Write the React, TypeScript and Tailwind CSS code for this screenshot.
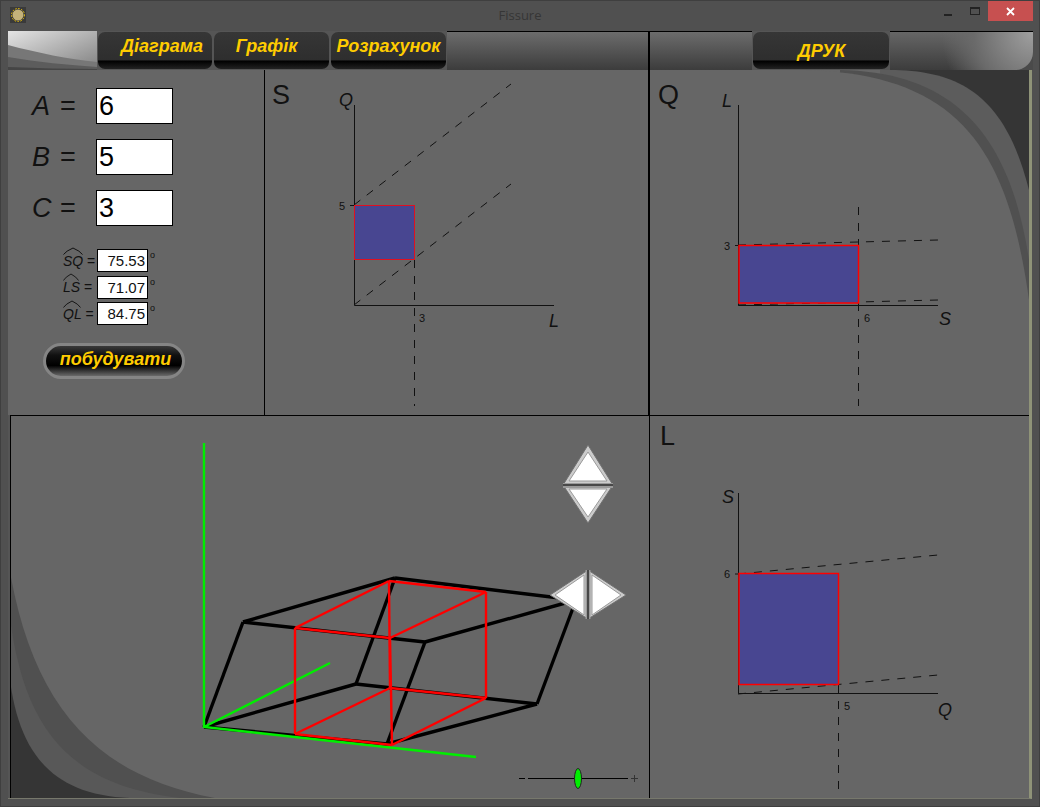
import type { ReactNode } from 'react';

type Seg = [number, number, number, number];

const blackEdges: Seg[] = [
  [204, 727, 243, 622],
  [243, 622, 425, 642],
  [425, 642, 387, 744],
  [204, 727, 387, 744],
  [243, 622, 395, 578],
  [395, 578, 576, 600],
  [425, 642, 576, 600],
  [576, 600, 537, 704],
  [387, 744, 537, 704],
  [204, 727, 356, 684],
  [356, 684, 537, 704],
  [356, 684, 395, 578],
];

const redEdges: Seg[] = [
  [295, 628, 390, 638],
  [295, 628, 389, 581],
  [389, 581, 486, 592],
  [486, 592, 390, 638],
  [486, 592, 486, 698],
  [390, 688, 486, 698],
  [295, 734, 390, 688],
  [295, 628, 295, 734],
  [295, 734, 392, 745],
  [392, 745, 486, 698],
  [390, 638, 392, 745],
  [389, 581, 390, 688],
];

function NavButton(props: { label: string; className?: string; width?: string }) {
  return (
    <div className={`h-[39px] bg-[#555555] p-[1px] ${props.width ?? 'w-[117px]'}`}>
      <div
        className={`flex h-full items-center justify-center rounded-[7px] bg-[linear-gradient(#363636_0%,#2e2e2e_76%,#000000_78%,#222222_100%)] text-[18px] font-bold italic text-[#ffcc00] ${props.className ?? ''}`}
      >
        {props.label}
      </div>
    </div>
  );
}

function BigField(props: { name: string; value: string }) {
  return (
    <div className="flex h-[36px] items-center">
      <div className="flex w-[64px] text-[27px] leading-none text-[#111111]">
        <i className="w-[28px]">{props.name}</i>
        <span>=</span>
      </div>
      <div className="flex h-[36px] w-[77px] items-center border border-black bg-white pl-[2px] text-[27px] leading-none text-black">
        {props.value}
      </div>
    </div>
  );
}

function AngleField(props: { name: string; value: string; hat: number }) {
  return (
    <div className="flex h-[23px] items-center">
      <div className="relative w-[34px] text-[14px] leading-none text-[#111111]">
        <svg className="absolute left-0 top-[-7px]" width={props.hat} height="8" viewBox="0 0 20 8" preserveAspectRatio="none">
          <path d="M0.5 7.5 Q3 4 10 1 Q17 4 19.5 7.5" fill="none" stroke="#111111" strokeWidth="1" />
        </svg>
        <i>{props.name}</i> =
      </div>
      <div className="flex h-[23px] w-[51px] items-center justify-end border border-black bg-white pr-[2px] text-[15px] leading-none text-[#111111]">
        {props.value}
      </div>
      <span className="ml-[2px] mt-[2px] self-start text-[9px] leading-none text-[#111111]">o</span>
    </div>
  );
}

// svg that fills its panel and is drawn in page coordinates
function PanelSvg(props: { box: string; children: ReactNode }) {
  return (
    <svg className="absolute inset-0 h-full w-full" viewBox={props.box}>
      {props.children}
    </svg>
  );
}

function AxisLabel(props: { x: number; y: number; text: string }) {
  return (
    <text x={props.x} y={props.y} fontSize="18" fontStyle="italic" textAnchor="middle" fill="#111111">
      {props.text}
    </text>
  );
}

function TickLabel(props: { x: number; y: number; text: string }) {
  return (
    <text x={props.x} y={props.y} fontSize="11" textAnchor="middle" fill="#111111">
      {props.text}
    </text>
  );
}

function App() {
  return (
    <div className="relative flex h-[807px] w-[1040px] flex-col overflow-hidden bg-[#505050] font-['Liberation_Sans',Arial,sans-serif] shadow-[inset_0_0_0_1px_#3f3f3f]">
      {/* title bar */}
      <div className="relative flex h-[31px] items-start justify-center">
        <svg className="absolute left-[10px] top-[7px]" width="16" height="16" viewBox="0 0 16 16">
          <rect width="16" height="16" fill="#3a3a3a" />
          <circle cx="8" cy="8" r="5.5" fill="#c4b27a" />
          <circle cx="8" cy="8" r="6.5" fill="none" stroke="#f5c800" strokeWidth="1" strokeDasharray="1.5 1.5" />
        </svg>
        <span className="mt-[7px] font-['Open_Sans',sans-serif] text-[13px] leading-[17px] text-[#363636]">Fissure</span>
        <div className="absolute left-[944px] top-[14px] h-[2px] w-[8px] bg-[#222222]" />
        <div className="absolute left-[970px] top-[7px] h-[8px] w-[10px] border border-t-2 border-[#222222]" />
        <div className="absolute left-[988px] top-[1px] flex h-[20px] w-[45px] items-center justify-center bg-[#c75050]">
          <svg width="9" height="9" viewBox="0 0 9 9">
            <path d="M1 1 L8 8 M8 1 L1 8" stroke="#ffffff" strokeWidth="1.8" />
          </svg>
        </div>
      </div>

      {/* toolbar */}
      <div className="ml-[8px] flex h-[39px] w-[1025px]">
        <svg className="h-[39px] w-[89px] shrink-0" viewBox="0 0 89 39">
          <defs>
            <linearGradient id="sw" x1="0" y1="0" x2="1" y2="1">
              <stop offset="0" stopColor="#e4e4e4" />
              <stop offset="1" stopColor="#808080" />
            </linearGradient>
          </defs>
          <rect width="89" height="39" fill="url(#sw)" />
          <path d="M0 14 C30 22 60 28 89 31 V39 H0 Z" fill="#777777" />
          <path d="M0 26 C30 31 60 34 89 36 V39 H0 Z" fill="#5c5c5c" />
          <path d="M0 36 C30 37 60 38 89 38 V39 H0 Z" fill="#454545" />
        </svg>
        <NavButton label="Діаграма" className="pb-[8px] pl-[14px]" width="w-[116px]" />
        <NavButton label="Графік" className="pb-[8px] pr-[10px]" />
        <NavButton label="Розрахунок" className="pb-[8px]" />
        <div className="w-[203px] border-t border-r-2 border-black bg-[linear-gradient(#6c6c6c,#3c3c3c)]" />
        <div className="w-[102px] border-t border-black bg-[linear-gradient(#6c6c6c,#3c3c3c)]" />
        <NavButton label="ДРУК" className="pl-[1px] pt-[2px]" width="w-[138px]" />
        <div className="flex-1 bg-[#4a4a4a]">
          <div className="h-full rounded-br-[18px] border-t border-black bg-[radial-gradient(circle_at_100%_0%,#a0a0a0_0%,#6a6a6a_40%,transparent_62%),linear-gradient(#666666,#3c3c3c)]" />
        </div>
      </div>

      {/* main area */}
      <div className="relative ml-[8px] h-[729px] w-[1024px] border-r-[3px] border-b border-r-[#8f9378] border-b-[#77786c] bg-[#666666] text-[#111111]">
        {/* corner swooshes */}
        <svg className="absolute inset-0 h-full w-full" viewBox="8 70 1021 728">
          <rect x="880" y="70" width="149" height="260" fill="#353535" />
          <path d="M880 70 C960 68 1005 95 1029 190 V330 H880 Z" fill="#5c5c5c" />
          <path d="M840 70 C955 72 1010 135 1029 260 V340 H840 Z" fill="#505050" />
          <path d="M800 70 C960 72 1008 150 1029 300 V340 H800 Z" fill="#666666" />

          <rect x="8" y="650" width="125" height="148" fill="#353535" />
          <path d="M8 660 C14 745 45 795 130 798 H300 V540 H8 Z" fill="#585858" />
          <path d="M8 600 C20 725 65 785 180 798 H300 V540 H8 Z" fill="#505050" />
          <path d="M8 560 C30 700 90 775 215 798 H300 V540 H8 Z" fill="#666666" />
          <rect x="8" y="415" width="2" height="383" fill="#555555" />
        </svg>

        <div className="relative flex h-[345px]">
          <div className="w-[257px] border-r border-black pl-[24px] pt-[18px]">
            <div className="flex flex-col gap-[15px]">
              <BigField name="A" value="6" />
              <BigField name="B" value="5" />
              <BigField name="C" value="3" />
            </div>
            <div className="ml-[31px] mt-[23px] flex flex-col gap-[3.5px]">
              <AngleField name="SQ" value="75.53" hat={20} />
              <AngleField name="LS" value="71.07" hat={16} />
              <AngleField name="QL" value="84.75" hat={18} />
            </div>
            <div className="ml-[11px] mt-[18px] flex h-[36px] w-[142px] items-center justify-center rounded-full border-[3px] border-[#858585] bg-[linear-gradient(#3a3a3a_0%,#111111_30%,#000000_65%,#6a6a6a_100%)] pb-[3px] pl-[3px] text-[18px] font-bold italic text-[#ffcc00]">
              побудувати
            </div>
          </div>

          <div className="relative w-[385px] border-r-2 border-black pl-[7px] text-[27px] leading-[32px]">
            <PanelSvg box="265 70 383 345">
              <g stroke="#111111" strokeWidth="1" fill="none">
                <path d="M354.5 105 V305.5 H554 M350 205.5 H355" />
                <path d="M354 205 L511 84 M354 305 L511 184 M414.5 260 V406" strokeDasharray="8 8" />
              </g>
              <rect x="354.5" y="205.5" width="60" height="54" fill="#484691" stroke="#e01020" strokeWidth="1" />
              <AxisLabel x={346} y={106} text="Q" />
              <AxisLabel x={554} y={327} text="L" />
              <TickLabel x={342} y={210} text="5" />
              <TickLabel x={422} y={322} text="3" />
            </PanelSvg>
            <span className="relative top-[9px]">S</span>
          </div>

          <div className="relative flex-1 pl-[8px] text-[27px] leading-[32px]">
            <PanelSvg box="650 70 379 345">
              <g stroke="#111111" strokeWidth="1" fill="none">
                <path d="M738.5 105 V305.5 H938 M735 245.5 H739" />
                <path d="M738 245 L938 240 M738 305 L938 300 M858.5 207 V406" strokeDasharray="8 8" />
              </g>
              <rect x="739" y="245.5" width="119.5" height="57.5" fill="#484691" stroke="#ff0000" strokeWidth="1.5" />
              <AxisLabel x={727} y={107} text="L" />
              <AxisLabel x={945} y={325} text="S" />
              <TickLabel x={727} y={250} text="3" />
              <TickLabel x={867} y={322} text="6" />
            </PanelSvg>
            <span className="relative top-[9px]">Q</span>
          </div>
        </div>

        <div className="relative ml-[2px] flex h-[383px] border-t border-l border-black">
          <div className="relative w-[639px] border-r border-black">
            <PanelSvg box="11 416 638 382">
              <g stroke="#000000" strokeWidth="3.4">
                {blackEdges.map((s, i) => (
                  <line key={i} x1={s[0]} y1={s[1]} x2={s[2]} y2={s[3]} />
                ))}
              </g>
              <g stroke="#00ee00" strokeWidth="2.4" fill="none">
                <path d="M204 443 V727 L476 757 M204 727 L330 663" />
              </g>
              <g stroke="#ff0000" strokeWidth="2.4">
                {redEdges.map((s, i) => (
                  <line key={i} x1={s[0]} y1={s[1]} x2={s[2]} y2={s[3]} />
                ))}
              </g>

              {/* up / down arrows */}
              <polygon points="588,445 563,485 613,485" fill="#cccccc" stroke="#707070" />
              <polygon points="588,452 569,481 607,481" fill="#ffffff" stroke="#9a9a9a" />
              <polygon points="588,523 563,485 613,485" fill="#cccccc" stroke="#707070" />
              <polygon points="588,517 569,489 607,489" fill="#ffffff" stroke="#9a9a9a" />
              <rect x="563" y="483" width="50" height="5" fill="#9a9a9a" />
              <rect x="563" y="484" width="50" height="2" fill="#484848" />

              {/* left / right arrows */}
              <polygon points="550,595 588,570 588,619" fill="#cccccc" stroke="#707070" />
              <polygon points="555,595 584,575 584,615" fill="#ffffff" stroke="#9a9a9a" />
              <polygon points="626,595 588,570 588,619" fill="#cccccc" stroke="#707070" />
              <polygon points="621,595 592,575 592,615" fill="#ffffff" stroke="#9a9a9a" />
              <rect x="585.5" y="570" width="5" height="49" fill="#9a9a9a" />
              <rect x="587" y="570" width="2" height="49" fill="#484848" />

              {/* zoom slider */}
              <path d="M519 778.5 H525 M528 778.5 H628" stroke="#000000" strokeWidth="1" />
              <path d="M631 778.5 H638 M634.5 775 V782" stroke="#333333" strokeWidth="1" />
              <ellipse cx="578" cy="778.5" rx="3.5" ry="10" fill="#00ee00" stroke="#222222" strokeWidth="1" />
            </PanelSvg>
          </div>

          <div className="relative flex-1 pl-[10px] text-[27px] leading-[32px]">
            <PanelSvg box="650 416 379 382">
              <g stroke="#111111" strokeWidth="1" fill="none">
                <path d="M738.5 493 V693.5 H938 M735 574 H739" />
                <path d="M738 574 L938 555 M738 694 L938 675 M838.5 685 V795" strokeDasharray="8 8" />
              </g>
              <rect x="739" y="573.5" width="99.5" height="111" fill="#484691" stroke="#ff0000" strokeWidth="1.5" />
              <AxisLabel x={728} y={503} text="S" />
              <AxisLabel x={945} y={716} text="Q" />
              <TickLabel x={727} y={578} text="6" />
              <TickLabel x={847} y={710} text="5" />
            </PanelSvg>
            <span className="relative top-[4px]">L</span>
          </div>
        </div>
      </div>
    </div>
  );
}

export default App;
